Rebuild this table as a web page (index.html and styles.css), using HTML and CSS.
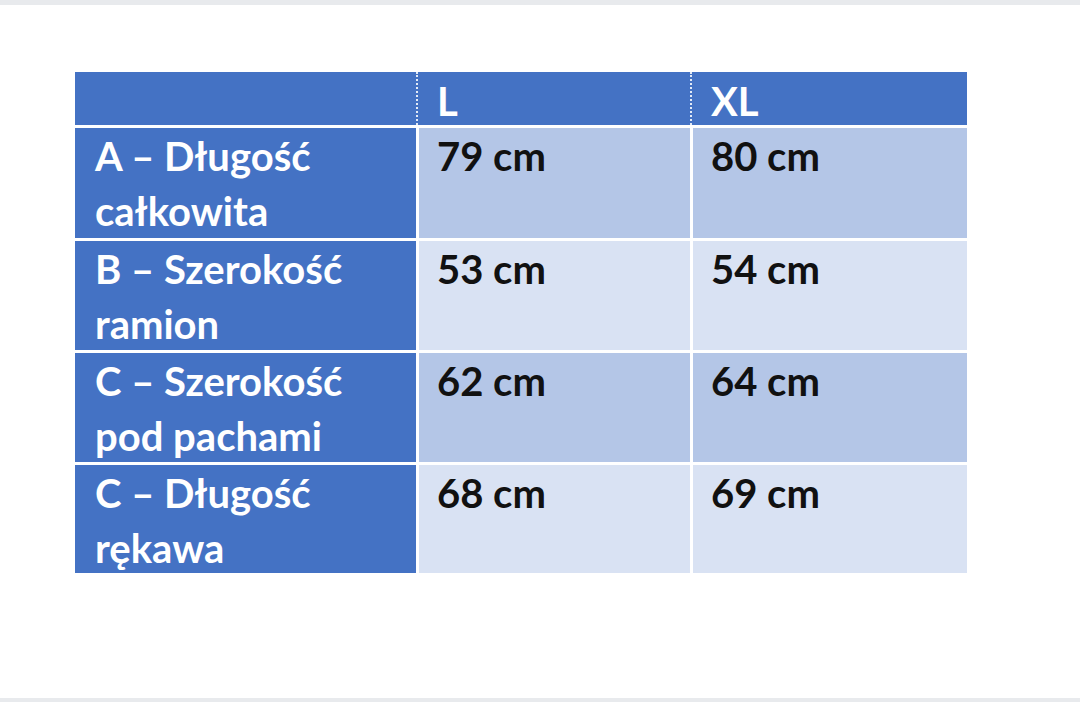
FILE: index.html
```html
<!DOCTYPE html>
<html lang="pl">
<head>
<meta charset="utf-8">
<title>Tabela rozmiarów</title>
<link rel="stylesheet" href="styles.css">
</head>
<body>
<div class="topbar"></div>
<main class="stage">
  <div class="sizes">
    <div class="cell head"></div>
    <div class="cell head div">L</div>
    <div class="cell head div">XL</div>

    <div class="cell label">A – Długość całkowita</div>
    <div class="cell val dark">79 cm</div>
    <div class="cell val dark">80 cm</div>

    <div class="cell label">B – Szerokość ramion</div>
    <div class="cell val light">53 cm</div>
    <div class="cell val light">54 cm</div>

    <div class="cell label">C – Szerokość pod pachami</div>
    <div class="cell val dark">62 cm</div>
    <div class="cell val dark">64 cm</div>

    <div class="cell label">C – Długość rękawa</div>
    <div class="cell val light">68 cm</div>
    <div class="cell val light">69 cm</div>
  </div>
</main>
<div class="bottombar"></div>
</body>
</html>
```

FILE: styles.css
```css
html, body {
  margin: 0;
  padding: 0;
  background: #ffffff;
}
body {
  width: 1080px;
  height: 702px;
  overflow: hidden;
  display: flex;
  flex-direction: column;
  font-family: Lato, "Open Sans", "Liberation Sans", sans-serif;
}
.topbar {
  height: 5px;
  background: #e8eaed;
  flex: none;
}
.bottombar {
  height: 4px;
  background: #e8eaed;
  flex: none;
}
.stage {
  flex: 1;
  padding: 67px 0 0 75px;
}
.sizes {
  display: grid;
  grid-template-columns: 341px 271px 274px;
  grid-template-rows: 53px 110px 109px 109px 108px;
  column-gap: 3px;
  row-gap: 3px;
}
.cell {
  font-weight: 700;
  font-size: 40px;
  line-height: 55px;
  padding: 1px 12px 0 18px;
  box-sizing: border-box;
  white-space: normal;
}
.head {
  background: #4472c4;
  color: #ffffff;
  line-height: 48px;
  padding-top: 5px;
}
.head.div {
  position: relative;
}
.head.div::before {
  content: "";
  position: absolute;
  left: -3px;
  top: 0;
  bottom: 0;
  width: 1px;
  background: #4472c4;
  border-left: 2px dotted rgba(255, 255, 255, 0.85);
}
.label {
  background: #4472c4;
  color: #ffffff;
  padding-left: 20px;
  padding-right: 12px;
}
.val {
  color: #111111;
}
.dark {
  background: #b4c6e7;
}
.light {
  background: #d9e2f3;
}
```
